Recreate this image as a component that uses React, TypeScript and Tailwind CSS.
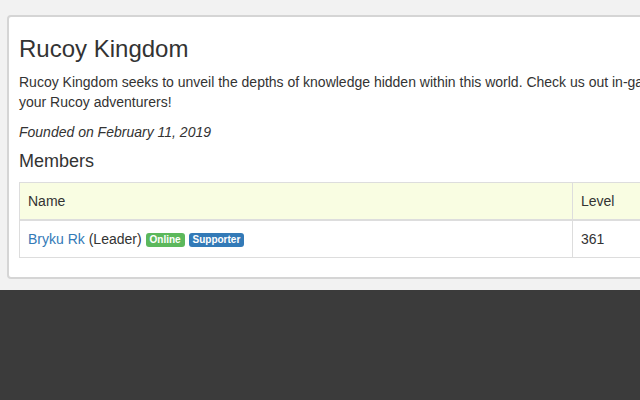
export default function App() {
  return (
    <div
      className="w-[640px] h-[400px] overflow-hidden flex flex-col bg-[#f2f2f2] text-[#333]"
      style={{ fontFamily: '"Liberation Sans", Arial, sans-serif' }}
    >
      <div className="pt-[15px] pl-[7px] pb-[11px]">
        <div className="w-[844px] border-2 border-[#d5d5d5] rounded-[4px] bg-white pt-[19px] pb-[19px] px-[10px]">
          <h3 className="text-[24px] leading-[26.4px] mb-[10px]">Rucoy Kingdom</h3>
          <p className="text-[14px] leading-[20px] mb-[10px]">
            Rucoy Kingdom seeks to unveil the depths of knowledge hidden within this world. Check us out in-game if you need some help on your Rucoy adventurers!
          </p>
          <p className="text-[14px] leading-[20px] italic mb-[10px]">Founded on February 11, 2019</p>
          <h4 className="text-[18px] leading-[19.8px] mb-[10px]">Members</h4>
          <table className="w-full border border-[#ddd] border-collapse text-[14px] leading-[20px]">
            <thead>
              <tr className="bg-[#f9fde2]">
                <th className="text-left font-normal p-[8px] border border-[#ddd] border-b-2 w-[553px]">Name</th>
                <th className="text-left font-normal p-[8px] border border-[#ddd] border-b-2">Level</th>
              </tr>
            </thead>
            <tbody>
              <tr>
                <td className="p-[8px] border border-[#ddd]">
                  <span className="text-[#337ab7]">Bryku Rk</span> (Leader){" "}
                  <span className="inline-block align-[1px] bg-[#5cb85c] text-white font-bold text-[10px] leading-[10px] py-[2px] px-[4px] rounded-[3px]">Online</span>{" "}
                  <span className="inline-block align-[1px] bg-[#337ab7] text-white font-bold text-[10px] leading-[10px] py-[2px] px-[4px] rounded-[3px]">Supporter</span>
                </td>
                <td className="p-[8px] border border-[#ddd]">361</td>
              </tr>
            </tbody>
          </table>
        </div>
      </div>
      <div className="flex-1 bg-[#3b3b3b]" />
    </div>
  );
}
